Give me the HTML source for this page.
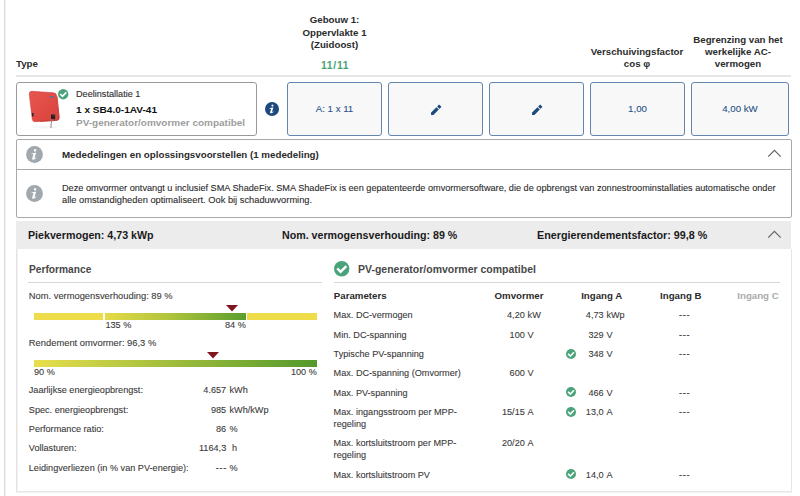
<!DOCTYPE html>
<html><head><meta charset="utf-8"><style>
html,body{margin:0;padding:0;background:#fff;}
body{width:800px;height:496px;position:relative;overflow:hidden;font-family:"Liberation Sans",sans-serif;}
.t{position:absolute;white-space:nowrap;}
.n{-webkit-text-stroke:0.1px currentColor;}
.r{position:absolute;box-sizing:border-box;}
svg.r{overflow:visible;}
</style></head><body>
<div class="r" style="left:4px;top:0px;width:1px;height:496px;background:#dcdcdc;"></div>
<div class="r" style="left:5px;top:0px;width:1px;height:496px;background:#f1f1f1;"></div>
<div class="r" style="left:791px;top:249px;width:1px;height:243px;background:#e6e6e6;"></div>
<div class="t" style="left:16.00px;top:53.20px;font-size:9.7px;line-height:21px;font-weight:bold;color:#2b2b2b;">Type</div>
<div class="t" style="left:-165.50px;top:9.45px;font-size:9.7px;line-height:21px;font-weight:bold;color:#2b2b2b;width:1000px;text-align:center;">Gebouw 1:</div>
<div class="t" style="left:-165.50px;top:21.65px;font-size:9.7px;line-height:21px;font-weight:bold;color:#2b2b2b;width:1000px;text-align:center;">Oppervlakte 1</div>
<div class="t" style="left:-165.50px;top:33.85px;font-size:9.7px;line-height:21px;font-weight:bold;color:#2b2b2b;width:1000px;text-align:center;">(Zuidoost)</div>
<div class="t" style="left:-164.90px;top:54.50px;font-size:10.3px;line-height:21px;font-weight:bold;color:#47a272;width:1000px;text-align:center;letter-spacing:0.75px;">11/11</div>
<div class="t" style="left:137.00px;top:41.00px;font-size:9.7px;line-height:21px;font-weight:bold;color:#2b2b2b;width:1000px;text-align:center;">Verschuivingsfactor</div>
<div class="t" style="left:137.00px;top:53.20px;font-size:9.7px;line-height:21px;font-weight:bold;color:#2b2b2b;width:1000px;text-align:center;">cos &phi;</div>
<div class="t" style="left:238.00px;top:28.90px;font-size:9.7px;line-height:21px;font-weight:bold;color:#2b2b2b;width:1000px;text-align:center;">Begrenzing van het</div>
<div class="t" style="left:238.00px;top:41.10px;font-size:9.7px;line-height:21px;font-weight:bold;color:#2b2b2b;width:1000px;text-align:center;">werkelijke AC-</div>
<div class="t" style="left:238.00px;top:53.30px;font-size:9.7px;line-height:21px;font-weight:bold;color:#2b2b2b;width:1000px;text-align:center;">vermogen</div>
<div class="r" style="left:16px;top:75px;width:775px;height:2px;background:#e6e6e6;"></div>
<div class="r" style="left:16px;top:82px;width:241px;height:54px;border:1px solid #9a9a9a;border-radius:3px;background:#fff;"></div>
<svg class="r" style="left:26px;top:88px" width="36" height="42" viewBox="26 88 36 42">
<defs><linearGradient id="inv" x1="0" y1="0" x2="1" y2="1"><stop offset="0" stop-color="#e85650"/><stop offset="1" stop-color="#d9413c"/></linearGradient></defs>
<ellipse cx="45" cy="127.3" rx="12" ry="1.2" fill="#f5f5f5"/>
<path d="M32 91.3 L53.5 92.8 Q56.3 93 56.6 95.8 L59.1 117.3 Q59.4 120.2 56.6 120.4 L35.2 121.7 Q32.6 121.9 32.3 119.3 L29.3 94.5 Q29 91.1 32 91.3 Z" fill="url(#inv)" stroke="#cf3f3b" stroke-width="0.6"/><path d="M57.2 96.5 L59.1 117.3 Q59.4 120.2 56.6 120.4 L40 121.4" fill="none" stroke="#c03834" stroke-width="0.9" opacity="0.8"/>
<path d="M49.6 96 L53.8 96.3 L53.6 97.6 L49.9 97.4 Z" fill="#4d73ad"/>
<circle cx="34.6" cy="95.6" r="0.4" fill="#7a4a60"/>
<rect x="51" y="114.4" width="4.2" height="4.8" rx="0.4" fill="#232323"/>
<circle cx="54.2" cy="115.2" r="0.5" fill="#3a62b0"/>
<rect x="31.9" y="113" width="1.7" height="3.4" fill="#2a2a2a"/>
<path d="M51.8 119.2 Q51.2 123 50.9 128" stroke="#8a8a8a" stroke-width="1" fill="none"/>
</svg>
<svg class="r" style="left:57.8px;top:89.3px" width="10.4" height="10.4" viewBox="-5 -5 10 10"><circle cx="0" cy="0" r="5" fill="#4aa37a"/><path d="M-2.9 -0.2 L-0.7 2.0 L3.0 -1.7" fill="none" stroke="#fff" stroke-width="1.6" stroke-linecap="butt" stroke-linejoin="miter"/></svg>
<div class="t n" style="left:76.00px;top:84.20px;font-size:9.15px;line-height:20px;font-weight:normal;color:#2b2b2b;">Deelinstallatie 1</div>
<div class="t" style="left:76.00px;top:98.70px;font-size:9.9px;line-height:21px;font-weight:bold;color:#111;transform:scaleX(1.0202);transform-origin:0 0;">1 x SB4.0-1AV-41</div>
<div class="t" style="left:76.00px;top:111.90px;font-size:9.9px;line-height:21px;font-weight:bold;color:#9d9d9d;transform:scaleX(1.0101);transform-origin:0 0;">PV-generator/omvormer compatibel</div>
<svg class="r" style="left:265px;top:102px" width="14" height="14" viewBox="0 0 17 17"><circle cx="8.5" cy="8.5" r="8.5" fill="#1d4a7e"/><path d="M5.3 7.7 Q7.6 6.7 10.2 6.8 L8.4 12.2 Q9.2 12.0 10.2 11.2 L10.4 11.8 Q8.7 13.9 6.8 13.7 Q5.8 13.5 6.2 12.3 L7.5 8.3 Q6.6 8.0 5.3 8.2 Z M9.05 3.05 a1.25 1.25 0 1 0 0.01 0 Z" fill="#fff"/></svg>
<div class="r" style="left:287px;top:82px;width:95px;height:54px;border:1px solid #6485b0;border-radius:3px;background:#f8f8f8;"></div>
<div class="t n" style="left:-165.50px;top:98.00px;font-size:9.7px;line-height:21px;font-weight:normal;color:#26528a;width:1000px;text-align:center;">A: 1 x 11</div>
<div class="r" style="left:388px;top:82px;width:95px;height:54px;border:1px solid #6485b0;border-radius:3px;background:#f8f8f8;"></div>
<svg class="r" style="left:428.5px;top:102.5px" width="14" height="14" viewBox="-7 -7 14 14"><g transform="rotate(-45)" fill="#1d4a7e"><path d="M-7.0 0 L-5.3 -1.65 L2.3 -1.65 L2.3 1.65 L-5.3 1.65 Z"/><rect x="3.2" y="-1.65" width="2.9" height="3.3" rx="0.5"/></g></svg>
<div class="r" style="left:489px;top:82px;width:95px;height:54px;border:1px solid #6485b0;border-radius:3px;background:#f8f8f8;"></div>
<svg class="r" style="left:529.5px;top:102.5px" width="14" height="14" viewBox="-7 -7 14 14"><g transform="rotate(-45)" fill="#1d4a7e"><path d="M-7.0 0 L-5.3 -1.65 L2.3 -1.65 L2.3 1.65 L-5.3 1.65 Z"/><rect x="3.2" y="-1.65" width="2.9" height="3.3" rx="0.5"/></g></svg>
<div class="r" style="left:590px;top:82px;width:95px;height:54px;border:1px solid #6485b0;border-radius:3px;background:#f8f8f8;"></div>
<div class="t n" style="left:137.50px;top:98.00px;font-size:9.7px;line-height:21px;font-weight:normal;color:#26528a;width:1000px;text-align:center;">1,00</div>
<div class="r" style="left:691px;top:82px;width:98px;height:54px;border:1px solid #6485b0;border-radius:3px;background:#f8f8f8;"></div>
<div class="t n" style="left:240.00px;top:98.00px;font-size:9.7px;line-height:21px;font-weight:normal;color:#26528a;width:1000px;text-align:center;">4,00 kW</div>
<div class="r" style="left:16px;top:139px;width:776px;height:79px;border:1px solid #a9a9a9;border-radius:2px;background:#fff;"></div>
<div class="r" style="left:17px;top:169px;width:774px;height:1px;background:#a9a9a9;"></div>
<svg class="r" style="left:25.700000000000003px;top:146.0px" width="17" height="17" viewBox="0 0 17 17"><circle cx="8.5" cy="8.5" r="8.4" fill="#a1a8ae"/><path d="M5.3 7.7 Q7.6 6.7 10.2 6.8 L8.4 12.2 Q9.2 12.0 10.2 11.2 L10.4 11.8 Q8.7 13.9 6.8 13.7 Q5.8 13.5 6.2 12.3 L7.5 8.3 Q6.6 8.0 5.3 8.2 Z M9.05 3.05 a1.25 1.25 0 1 0 0.01 0 Z" fill="#fff"/></svg>
<svg class="r" style="left:25.700000000000003px;top:184.8px" width="17" height="17" viewBox="0 0 17 17"><circle cx="8.5" cy="8.5" r="8.4" fill="#a1a8ae"/><path d="M5.3 7.7 Q7.6 6.7 10.2 6.8 L8.4 12.2 Q9.2 12.0 10.2 11.2 L10.4 11.8 Q8.7 13.9 6.8 13.7 Q5.8 13.5 6.2 12.3 L7.5 8.3 Q6.6 8.0 5.3 8.2 Z M9.05 3.05 a1.25 1.25 0 1 0 0.01 0 Z" fill="#fff"/></svg>
<div class="t" style="left:62.00px;top:143.70px;font-size:9.76px;line-height:21px;font-weight:bold;color:#2b2b2b;">Mededelingen en oplossingsvoorstellen (1 mededeling)</div>
<div class="t n" style="left:62.00px;top:177.70px;font-size:9.17px;line-height:20px;font-weight:normal;color:#2b2b2b;">Deze omvormer ontvangt u inclusief SMA ShadeFix. SMA ShadeFix is een gepatenteerde omvormersoftware, die de opbrengst van zonnestroominstallaties automatische onder</div>
<div class="t n" style="left:62.00px;top:189.90px;font-size:9.3px;line-height:20px;font-weight:normal;color:#2b2b2b;">alle omstandigheden optimaliseert. Ook bij schaduwvorming.</div>
<svg class="r" style="left:767.3px;top:149.4px" width="15" height="9" viewBox="0 0 15 9"><path d="M1.2 7.6 L7.45 1.4 L13.7 7.6" fill="none" stroke="#666" stroke-width="1.25"/></svg>
<div class="r" style="left:16px;top:221px;width:775px;height:28px;background:#ececec;"></div>
<div class="t" style="left:28.00px;top:223.70px;font-size:10.66px;line-height:22px;font-weight:bold;color:#1a1a1a;">Piekvermogen: 4,73 kWp</div>
<div class="t" style="left:282.00px;top:223.70px;font-size:10.67px;line-height:22px;font-weight:bold;color:#1a1a1a;">Nom. vermogensverhouding: 89 %</div>
<div class="t" style="left:537.00px;top:223.70px;font-size:10.76px;line-height:22px;font-weight:bold;color:#1a1a1a;">Energierendementsfactor: 99,8 %</div>
<svg class="r" style="left:767.3px;top:230.0px" width="15" height="9" viewBox="0 0 15 9"><path d="M1.2 7.6 L7.45 1.4 L13.7 7.6" fill="none" stroke="#666" stroke-width="1.25"/></svg>
<div class="r" style="left:16px;top:249px;width:1px;height:243px;background:#e3e3e3;"></div>
<div class="r" style="left:17px;top:249px;width:1px;height:243px;background:#f3f3f3;"></div>
<div class="r" style="left:16px;top:491px;width:776px;height:1px;background:#e6e6e6;"></div>
<div class="r" style="left:16px;top:492px;width:776px;height:1px;background:#f3f3f3;"></div>
<div class="t" style="left:28.60px;top:258.70px;font-size:10.4px;line-height:21px;font-weight:bold;color:#484848;transform:scaleX(0.9808);transform-origin:0 0;">Performance</div>
<div class="r" style="left:28px;top:282px;width:294px;height:1px;background:#d6d6d6;"></div>
<div class="t n" style="left:28.80px;top:286.40px;font-size:9.35px;line-height:20px;font-weight:normal;color:#3a3a3a;">Nom. vermogensverhouding: 89 %</div>
<div class="r" style="left:34px;top:313px;width:69px;height:7px;background:#efdc4a;"></div>
<div class="r" style="left:105px;top:313px;width:141px;height:7px;background:linear-gradient(to right,#e6da48,#b0c43c 45%,#5a9e2e);"></div>
<div class="r" style="left:247px;top:313px;width:70px;height:7px;background:#efdc4a;"></div>
<svg class="r" style="left:225.8px;top:305px" width="12" height="6.5" viewBox="0 0 12 6.5"><path d="M0 0 L12 0 L6 6.5 Z" fill="#80141f"/></svg>
<div class="t n" style="left:105.40px;top:315.10px;font-size:9.15px;line-height:20px;font-weight:normal;color:#3a3a3a;">135 %</div>
<div class="t n" style="left:-754.20px;top:315.00px;font-size:9.15px;line-height:20px;font-weight:normal;color:#3a3a3a;width:1000px;text-align:right;">84 %</div>
<div class="t n" style="left:28.80px;top:332.90px;font-size:9.37px;line-height:20px;font-weight:normal;color:#3a3a3a;">Rendement omvormer: 96,3 %</div>
<div class="r" style="left:34px;top:360px;width:283px;height:7px;background:linear-gradient(to right,#e8df4c,#53992b);"></div>
<svg class="r" style="left:206.7px;top:352.2px" width="12" height="6.5" viewBox="0 0 12 6.5"><path d="M0 0 L12 0 L6 6.5 Z" fill="#80141f"/></svg>
<div class="t n" style="left:34.00px;top:362.00px;font-size:9.15px;line-height:20px;font-weight:normal;color:#3a3a3a;">90 %</div>
<div class="t n" style="left:-683.20px;top:362.20px;font-size:9.15px;line-height:20px;font-weight:normal;color:#3a3a3a;width:1000px;text-align:right;">100 %</div>
<div class="t n" style="left:28.80px;top:380.30px;font-size:9.15px;line-height:20px;font-weight:normal;color:#3a3a3a;">Jaarlijkse energieopbrengst:</div>
<div class="t n" style="left:-773.80px;top:380.30px;font-size:9.15px;line-height:20px;font-weight:normal;color:#3a3a3a;width:1000px;text-align:right;">4.657</div>
<div class="t n" style="left:229.50px;top:380.30px;font-size:9.15px;line-height:20px;font-weight:normal;color:#3a3a3a;">kWh</div>
<div class="t n" style="left:28.80px;top:399.63px;font-size:9.15px;line-height:20px;font-weight:normal;color:#3a3a3a;">Spec. energieopbrengst:</div>
<div class="t n" style="left:-773.80px;top:399.63px;font-size:9.15px;line-height:20px;font-weight:normal;color:#3a3a3a;width:1000px;text-align:right;">985</div>
<div class="t n" style="left:229.50px;top:399.63px;font-size:9.15px;line-height:20px;font-weight:normal;color:#3a3a3a;">kWh/kWp</div>
<div class="t n" style="left:28.80px;top:418.96px;font-size:9.15px;line-height:20px;font-weight:normal;color:#3a3a3a;">Performance ratio:</div>
<div class="t n" style="left:-773.80px;top:418.96px;font-size:9.15px;line-height:20px;font-weight:normal;color:#3a3a3a;width:1000px;text-align:right;">86</div>
<div class="t n" style="left:229.50px;top:418.96px;font-size:9.15px;line-height:20px;font-weight:normal;color:#3a3a3a;">%</div>
<div class="t n" style="left:28.80px;top:438.29px;font-size:9.15px;line-height:20px;font-weight:normal;color:#3a3a3a;">Vollasturen:</div>
<div class="t n" style="left:-773.80px;top:438.29px;font-size:9.15px;line-height:20px;font-weight:normal;color:#3a3a3a;width:1000px;text-align:right;">1164,3</div>
<div class="t n" style="left:229.50px;top:438.29px;font-size:9.15px;line-height:20px;font-weight:normal;color:#3a3a3a;">&nbsp;h</div>
<div class="t n" style="left:28.80px;top:457.62px;font-size:9.15px;line-height:20px;font-weight:normal;color:#3a3a3a;">Leidingverliezen (in % van PV-energie):</div>
<div class="t n" style="left:-773.10px;top:457.62px;font-size:9.15px;line-height:20px;font-weight:normal;color:#3a3a3a;width:1000px;text-align:right;letter-spacing:0.7px;">---</div>
<div class="t n" style="left:229.50px;top:457.62px;font-size:9.15px;line-height:20px;font-weight:normal;color:#3a3a3a;">%</div>
<svg class="r" style="left:334.40000000000003px;top:260.8px" width="15.4" height="15.4" viewBox="-5 -5 10 10"><circle cx="0" cy="0" r="5" fill="#4aa37a"/><path d="M-2.9 -0.2 L-0.7 2.0 L3.0 -1.7" fill="none" stroke="#fff" stroke-width="1.6" stroke-linecap="butt" stroke-linejoin="miter"/></svg>
<div class="t" style="left:357.60px;top:257.70px;font-size:10.55px;line-height:22px;font-weight:bold;color:#484848;transform:scaleX(0.9953);transform-origin:0 0;">PV-generator/omvormer compatibel</div>
<div class="r" style="left:334px;top:282px;width:446px;height:1px;background:#d6d6d6;"></div>
<div class="t" style="left:333.80px;top:285.20px;font-size:9.7px;line-height:21px;font-weight:bold;color:#2b2b2b;">Parameters</div>
<div class="t" style="left:19.00px;top:285.10px;font-size:9.7px;line-height:21px;font-weight:bold;color:#2b2b2b;width:1000px;text-align:center;">Omvormer</div>
<div class="t" style="left:101.70px;top:285.10px;font-size:9.7px;line-height:21px;font-weight:bold;color:#2b2b2b;width:1000px;text-align:center;">Ingang A</div>
<div class="t" style="left:180.80px;top:285.10px;font-size:9.7px;line-height:21px;font-weight:bold;color:#2b2b2b;width:1000px;text-align:center;">Ingang B</div>
<div class="t" style="left:258.00px;top:285.10px;font-size:9.7px;line-height:21px;font-weight:bold;color:#ababab;width:1000px;text-align:center;">Ingang C</div>
<div class="t n" style="left:333.60px;top:305.35px;font-size:9.15px;line-height:20px;font-weight:normal;color:#3a3a3a;">Max. DC-vermogen</div>
<div class="t n" style="left:-475.20px;top:305.35px;font-size:9.15px;line-height:20px;font-weight:normal;color:#3a3a3a;width:1000px;text-align:right;">4,20</div>
<div class="t n" style="left:527.60px;top:305.35px;font-size:9.15px;line-height:20px;font-weight:normal;color:#3a3a3a;">kW</div>
<div class="t n" style="left:-396.40px;top:305.35px;font-size:9.15px;line-height:20px;font-weight:normal;color:#3a3a3a;width:1000px;text-align:right;">4,73</div>
<div class="t n" style="left:606.40px;top:305.35px;font-size:9.15px;line-height:20px;font-weight:normal;color:#3a3a3a;">kWp</div>
<div class="t n" style="left:184.60px;top:305.35px;font-size:9.15px;line-height:20px;font-weight:normal;color:#3a3a3a;width:1000px;text-align:center;letter-spacing:0.7px;">---</div>
<div class="t n" style="left:333.60px;top:324.85px;font-size:9.15px;line-height:20px;font-weight:normal;color:#3a3a3a;">Min. DC-spanning</div>
<div class="t n" style="left:-475.20px;top:324.85px;font-size:9.15px;line-height:20px;font-weight:normal;color:#3a3a3a;width:1000px;text-align:right;">100</div>
<div class="t n" style="left:527.60px;top:324.85px;font-size:9.15px;line-height:20px;font-weight:normal;color:#3a3a3a;">V</div>
<div class="t n" style="left:-396.40px;top:324.85px;font-size:9.15px;line-height:20px;font-weight:normal;color:#3a3a3a;width:1000px;text-align:right;">329</div>
<div class="t n" style="left:606.40px;top:324.85px;font-size:9.15px;line-height:20px;font-weight:normal;color:#3a3a3a;">V</div>
<div class="t n" style="left:184.60px;top:324.85px;font-size:9.15px;line-height:20px;font-weight:normal;color:#3a3a3a;width:1000px;text-align:center;letter-spacing:0.7px;">---</div>
<div class="t n" style="left:333.60px;top:344.25px;font-size:9.15px;line-height:20px;font-weight:normal;color:#3a3a3a;">Typische PV-spanning</div>
<svg class="r" style="left:566.4px;top:348.95px" width="10.0" height="10.0" viewBox="-5 -5 10 10"><circle cx="0" cy="0" r="5" fill="#4aa37a"/><path d="M-2.9 -0.2 L-0.7 2.0 L3.0 -1.7" fill="none" stroke="#fff" stroke-width="1.6" stroke-linecap="butt" stroke-linejoin="miter"/></svg>
<div class="t n" style="left:-396.40px;top:344.25px;font-size:9.15px;line-height:20px;font-weight:normal;color:#3a3a3a;width:1000px;text-align:right;">348</div>
<div class="t n" style="left:606.40px;top:344.25px;font-size:9.15px;line-height:20px;font-weight:normal;color:#3a3a3a;">V</div>
<div class="t n" style="left:184.60px;top:344.25px;font-size:9.15px;line-height:20px;font-weight:normal;color:#3a3a3a;width:1000px;text-align:center;letter-spacing:0.7px;">---</div>
<div class="t n" style="left:333.60px;top:363.45px;font-size:9.15px;line-height:20px;font-weight:normal;color:#3a3a3a;">Max. DC-spanning (Omvormer)</div>
<div class="t n" style="left:-475.20px;top:363.45px;font-size:9.15px;line-height:20px;font-weight:normal;color:#3a3a3a;width:1000px;text-align:right;">600</div>
<div class="t n" style="left:527.60px;top:363.45px;font-size:9.15px;line-height:20px;font-weight:normal;color:#3a3a3a;">V</div>
<div class="t n" style="left:333.60px;top:382.65px;font-size:9.15px;line-height:20px;font-weight:normal;color:#3a3a3a;">Max. PV-spanning</div>
<svg class="r" style="left:566.4px;top:387.35px" width="10.0" height="10.0" viewBox="-5 -5 10 10"><circle cx="0" cy="0" r="5" fill="#4aa37a"/><path d="M-2.9 -0.2 L-0.7 2.0 L3.0 -1.7" fill="none" stroke="#fff" stroke-width="1.6" stroke-linecap="butt" stroke-linejoin="miter"/></svg>
<div class="t n" style="left:-396.40px;top:382.65px;font-size:9.15px;line-height:20px;font-weight:normal;color:#3a3a3a;width:1000px;text-align:right;">466</div>
<div class="t n" style="left:606.40px;top:382.65px;font-size:9.15px;line-height:20px;font-weight:normal;color:#3a3a3a;">V</div>
<div class="t n" style="left:184.60px;top:382.65px;font-size:9.15px;line-height:20px;font-weight:normal;color:#3a3a3a;width:1000px;text-align:center;letter-spacing:0.7px;">---</div>
<div class="t n" style="left:333.60px;top:402.05px;font-size:9.15px;line-height:20px;font-weight:normal;color:#3a3a3a;">Max. ingangsstroom per MPP-</div>
<div class="t n" style="left:333.60px;top:414.05px;font-size:9.15px;line-height:20px;font-weight:normal;color:#3a3a3a;">regeling</div>
<div class="t n" style="left:-475.20px;top:402.05px;font-size:9.15px;line-height:20px;font-weight:normal;color:#3a3a3a;width:1000px;text-align:right;">15/15</div>
<div class="t n" style="left:527.60px;top:402.05px;font-size:9.15px;line-height:20px;font-weight:normal;color:#3a3a3a;">A</div>
<svg class="r" style="left:566.4px;top:406.75px" width="10.0" height="10.0" viewBox="-5 -5 10 10"><circle cx="0" cy="0" r="5" fill="#4aa37a"/><path d="M-2.9 -0.2 L-0.7 2.0 L3.0 -1.7" fill="none" stroke="#fff" stroke-width="1.6" stroke-linecap="butt" stroke-linejoin="miter"/></svg>
<div class="t n" style="left:-396.40px;top:402.05px;font-size:9.15px;line-height:20px;font-weight:normal;color:#3a3a3a;width:1000px;text-align:right;">13,0</div>
<div class="t n" style="left:606.40px;top:402.05px;font-size:9.15px;line-height:20px;font-weight:normal;color:#3a3a3a;">A</div>
<div class="t n" style="left:184.60px;top:402.05px;font-size:9.15px;line-height:20px;font-weight:normal;color:#3a3a3a;width:1000px;text-align:center;letter-spacing:0.7px;">---</div>
<div class="t n" style="left:333.60px;top:433.45px;font-size:9.15px;line-height:20px;font-weight:normal;color:#3a3a3a;">Max. kortsluitstroom per MPP-</div>
<div class="t n" style="left:333.60px;top:445.45px;font-size:9.15px;line-height:20px;font-weight:normal;color:#3a3a3a;">regeling</div>
<div class="t n" style="left:-475.20px;top:433.45px;font-size:9.15px;line-height:20px;font-weight:normal;color:#3a3a3a;width:1000px;text-align:right;">20/20</div>
<div class="t n" style="left:527.60px;top:433.45px;font-size:9.15px;line-height:20px;font-weight:normal;color:#3a3a3a;">A</div>
<div class="t n" style="left:333.60px;top:464.65px;font-size:9.15px;line-height:20px;font-weight:normal;color:#3a3a3a;">Max. kortsluitstroom PV</div>
<svg class="r" style="left:566.4px;top:469.35px" width="10.0" height="10.0" viewBox="-5 -5 10 10"><circle cx="0" cy="0" r="5" fill="#4aa37a"/><path d="M-2.9 -0.2 L-0.7 2.0 L3.0 -1.7" fill="none" stroke="#fff" stroke-width="1.6" stroke-linecap="butt" stroke-linejoin="miter"/></svg>
<div class="t n" style="left:-396.40px;top:464.65px;font-size:9.15px;line-height:20px;font-weight:normal;color:#3a3a3a;width:1000px;text-align:right;">14,0</div>
<div class="t n" style="left:606.40px;top:464.65px;font-size:9.15px;line-height:20px;font-weight:normal;color:#3a3a3a;">A</div>
<div class="t n" style="left:184.60px;top:464.65px;font-size:9.15px;line-height:20px;font-weight:normal;color:#3a3a3a;width:1000px;text-align:center;letter-spacing:0.7px;">---</div>
</body></html>
